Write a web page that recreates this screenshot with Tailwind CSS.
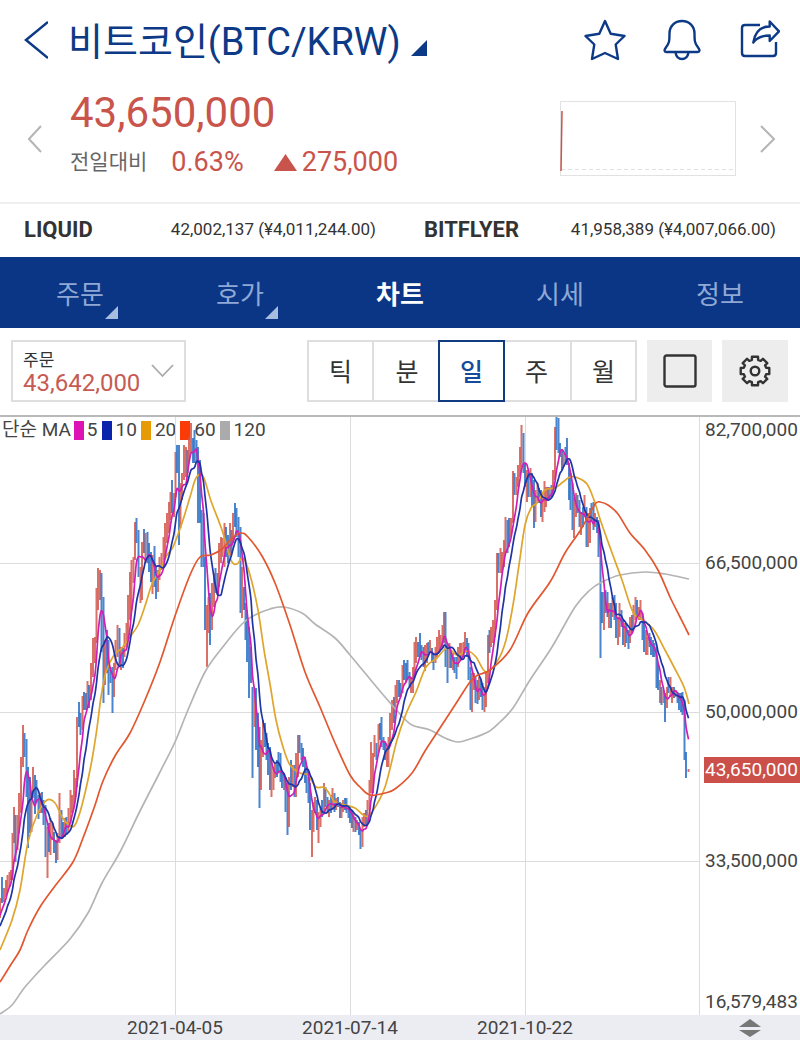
<!DOCTYPE html>
<html lang="ko">
  <head>
    <meta charset="UTF-8" />
    <meta name="viewport" content="width=device-width, initial-scale=1.0" />
    <title>비트코인(BTC/KRW)</title>
    <script src="https://cdn.jsdelivr.net/npm/@tailwindcss/browser@4"></script>
  </head>
  <body
    class="bg-white text-[#333] font-[Roboto,'Noto_Sans_CJK_KR',sans-serif] overflow-x-hidden"
  >
    <div class="flex flex-col min-h-screen">
      <header class="flex items-center h-20 pl-6 pr-5 text-[#0d3a86]">
        <button aria-label="뒤로" class="shrink-0">
          <svg class="w-6 h-10" viewBox="0 0 24 40" fill="none" stroke="currentColor" stroke-width="2.5">
            <path d="M24 2 2 20l22 18" />
          </svg>
        </button>
        <h1 class="ml-5 pt-1 flex-1">
          <button class="flex items-center text-[38px] leading-[44px] whitespace-nowrap">
            비트코인(BTC/KRW)
            <svg class="w-4 h-4 ml-[10px] mt-3" viewBox="0 0 16 16" fill="currentColor">
              <path d="M16 0v16H0z" />
            </svg>
          </button>
        </h1>
        <div class="flex items-center gap-[35px]">
          <button aria-label="관심">
            <svg class="w-[42px] h-[42px]" viewBox="0 0 42 42" fill="none" stroke="currentColor" stroke-width="2.4" stroke-linejoin="round">
              <path d="M21 2l5.700 12.700L40.500 17l-8.800 8.500L34 40l-13-6-13 6 2.300-14.500L1.500 17l13.800-2.300z" />
            </svg>
          </button>
          <button aria-label="알림">
            <svg class="w-[42px] h-[42px]" viewBox="0 0 42 42" fill="none" stroke="currentColor" stroke-width="2.4" stroke-linejoin="round">
              <path d="M21 2C13.500 2 8.500 7.500 8.500 14.500c0 8-.3 10-3.900 14.500-1.500 2-1.500 4 .6 4h31.600c2.100 0 2.100-2 .6-4-3.600-4.500-3.900-6.500-3.900-14.500C33.500 7.500 28.500 2 21 2z" />
              <path d="M14.500 33.500c.7 4 3.200 6.500 6.500 6.500s5.800-2.500 6.500-6.500" />
            </svg>
          </button>
          <button aria-label="공유">
            <svg class="w-[42px] h-[42px]" viewBox="0 0 42 42" fill="none" stroke="currentColor" stroke-width="2.4" stroke-linejoin="round">
              <path d="M22 6H7Q4 6 4 9v25q0 3 3 3h28q3 0 3-3V23" />
              <path d="M15.300 23.500C17 12.500 22 7.500 31.700 7.500V2.500L41 12.300 31.700 22v-5.500C24.500 16.500 19 18.500 15.300 23.500z" />
            </svg>
          </button>
        </div>
      </header>

      <!-- 현재가 -->
      <section class="flex items-start h-[124px] pt-2 pl-7 pr-6 border-b-2 border-[#efefef]">
        <button aria-label="이전 종목" class="mt-[37px] text-[#b5b5b5]">
          <svg class="w-[14px] h-7" viewBox="0 0 14 28" fill="none" stroke="currentColor" stroke-width="2">
            <path d="M13 1 1 14l12 13" />
          </svg>
        </button>
        <div class="ml-7 flex-1 text-[#c9544b]">
          <p class="text-[42px] leading-[50px]">43,650,000</p>
          <p class="flex items-center mt-2 text-[27px] leading-[32px]">
            <span class="text-[21px] text-[#666]">전일대비</span>
            <span class="ml-6">0.63%</span>
            <svg class="w-[23px] h-[17px] ml-[30px]" viewBox="0 0 23 17" fill="currentColor">
              <path d="M11.500 0 23 17H0z" />
            </svg>
            <span class="ml-[5px]">275,000</span>
          </p>
        </div>
        <svg class="w-44 h-[75px] mt-[13px]" viewBox="0 0 176 75" fill="none">
          <rect x=".5" y=".5" width="175" height="74" stroke="#e2e2e2" />
          <path d="M1 68.500H175" stroke="#e0e0e0" stroke-dasharray="4 3" />
          <path d="M1 70 2 10" stroke="#c9544b" stroke-width="1.500" />
        </svg>
        <button aria-label="다음 종목" class="ml-6 mt-[37px] text-[#b5b5b5]">
          <svg class="w-4 h-7" viewBox="0 0 16 28" fill="none" stroke="currentColor" stroke-width="2">
            <path d="M1 1l13 13L1 27" />
          </svg>
        </button>
      </section>

      <!-- 해외 시세 -->
      <section class="grid grid-cols-2 h-[53px] pb-[2px] text-[17px] whitespace-nowrap">
        <div class="flex items-center justify-between pl-6 pr-6">
          <strong class="text-[22px] font-bold">LIQUID</strong>
          <span>42,002,137 (¥4,011,244.00)</span>
        </div>
        <div class="flex items-center justify-between pl-6 pr-6">
          <strong class="text-[22px] font-bold">BITFLYER</strong>
          <span>41,958,389 (¥4,007,066.00)</span>
        </div>
      </section>

      <nav class="grid grid-cols-5 h-[71px] pt-[5px] bg-[#0a3685] text-[26px] text-[#8fa8d6]">
        <a href="#order" class="flex items-center justify-center">
          <span class="relative">주문
            <svg class="absolute -right-[14px] -bottom-1 w-[13px] h-[13px]" viewBox="0 0 13 13" fill="#a9bedf"><path d="M13 0v13H0z" /></svg>
          </span>
        </a>
        <a href="#hoga" class="flex items-center justify-center">
          <span class="relative">호가
            <svg class="absolute -right-[14px] -bottom-1 w-[13px] h-[13px]" viewBox="0 0 13 13" fill="#a9bedf"><path d="M13 0v13H0z" /></svg>
          </span>
        </a>
        <a href="#chart" class="flex items-center justify-center font-bold text-white">차트</a>
        <a href="#sise" class="flex items-center justify-center">시세</a>
        <a href="#info" class="flex items-center justify-center">정보</a>
      </nav>

      <!-- 차트 도구 -->
      <div class="flex items-center h-[87px] pb-[1px] pl-[11px] pr-3">
        <button class="flex items-center justify-between w-[175px] h-[62px] pl-[10px] pr-[10px] border-2 border-[#dedede] text-left">
          <span class="pt-[2px]">
            <span class="block text-[17px] leading-[22px]">주문</span>
            <span class="block text-[24px] leading-[24px] text-[#c65b53]">43,642,000</span>
          </span>
          <svg class="w-[23px] h-[14px]" viewBox="0 0 23 14" fill="none" stroke="#aaa" stroke-width="1.800">
            <path d="M1 1l10.500 11L22 1" />
          </svg>
        </button>
        <div class="flex ml-auto h-[62px] text-[25px]">
          <button class="w-[67px] pt-1 border-2 border-[#dedede]">틱</button>
          <button class="w-[66px] pt-1 border-y-2 border-[#dedede]">분</button>
          <button class="relative z-10 w-[67px] pt-1 -mx-[2px] border-2 border-[#0f3c80] text-[#164a9c] font-medium">일</button>
          <button class="w-[67px] pt-1 border-y-2 border-[#dedede]">주</button>
          <button class="w-[67px] pt-1 border-2 border-[#dedede]">월</button>
        </div>
        <button aria-label="전체 화면" class="flex items-center justify-center w-[65px] h-[62px] ml-[10px] bg-[#ededed]">
          <svg class="w-[34px] h-[34px]" viewBox="0 0 34 34" fill="none" stroke="#333" stroke-width="2.400">
            <rect x="1.500" y="1.500" width="31" height="31" rx="2" />
          </svg>
        </button>
        <button aria-label="설정" class="flex items-center justify-center w-[66px] h-[62px] ml-[10px] bg-[#ededed]">
          <svg class="w-8 h-8" viewBox="0 0 32 32" fill="none" stroke="#333" stroke-width="2.400" stroke-linejoin="round">
            <path id="gear" />
            <circle cx="16" cy="16" r="4.300" />
          </svg>
        </button>
      </div>

      <!-- 차트 -->
      <main class="flex flex-1 border-t-2 border-[#b9b9b9] text-[19px] text-[#444]">
        <div class="relative flex-1">
          <div class="absolute left-[2px] top-[2px] flex items-center h-[22px] whitespace-nowrap">
            <span>단순 MA</span>
            <i class="w-[10px] h-[19px] mx-[3px] bg-[#dc12b4]"></i>5
            <i class="w-[10px] h-[19px] ml-1 mr-1 bg-[#0a24ab]"></i>10
            <i class="w-[10px] h-[19px] ml-1 mr-1 bg-[#e69b06]"></i>20
            <i class="w-[10px] h-[19px] ml-1 mr-1 bg-[#fb3b05]"></i>60
            <i class="w-[10px] h-[19px] ml-1 mr-1 bg-[#ababab]"></i>120
          </div>
          <svg class="relative block w-full h-[598px]" viewBox="0 417 700 598" preserveAspectRatio="none" fill="none">
            <path stroke="#dcdcdc" d="M0 563.500H700M0 712.500H700M0 861.500H700M175.500 417V1015M350.500 417V1015M525.500 417V1015M699.500 417V1015" />
            <g id="candles" stroke-width="2" stroke-opacity=".85"></g>
            <g id="lines" stroke-width="1.700"></g>
          </svg>
        </div>
        <div class="flex flex-col w-[100px] pl-1 leading-6 overflow-hidden">
          <span class="mt-px pl-px">82,700,000</span>
          <span class="mt-[109px] pl-px">66,500,000</span>
          <span class="mt-[125px] pl-px">50,000,000</span>
          <span class="mt-[33px] pl-px leading-[26px] bg-[#ca5049] text-white">43,650,000</span>
          <span class="mt-[66px] pl-px">33,500,000</span>
          <span class="mt-[117px] pl-px">16,579,483</span>
        </div>
      </main>

      <footer class="flex h-[25px] bg-[#ecedf3] text-[19px] leading-[25px] text-[#444]">
        <div class="flex-1">
          <div class="grid grid-cols-3 w-3/4 mx-auto text-center">
            <span>2021-04-05</span>
            <span>2021-07-14</span>
            <span>2021-10-22</span>
          </div>
        </div>
        <button aria-label="차트 높이 조절" class="flex items-center justify-center w-[100px]">
          <svg class="w-[22px] h-[18px]" viewBox="0 0 22 18" fill="#777">
            <path d="M11 0l11 8H0zM11 18l11-7H0z" />
          </svg>
        </button>
      </footer>
    </div>

    <script>
      // x, high, low, u = 상승 / d = 하락
      const candles = `
0 898 918 u,2 877 903 d,4 888 902 u,6 880 897 u,7.5 875 892 u,9.5 872 887 u,11 870 880 u,12.5 833 880 u,14 807 843 u,15.5 815 862 d,
17.5 815 850 u,19 793 833 u,21 757 813 u,23 725 767 u,24.5 733 757 d,26.5 739 797 d,28 767 848 d,30 777 833 d,31.5 793 832 u,33 767 798 u,
35 775 814 d,36.5 780 803 d,38.5 795 819 d,40 793 813 u,42 792 813 d,43.5 800 825 d,45.5 805 857 d,47.5 827 878 u,49 823 852 d,50.5 818 855 u,
52.5 823 840 u,54 832 853 d,56 840 863 d,57.5 833 860 u,59.5 793 843 u,61.5 810 837 d,63 822 838 d,65 818 837 u,66.5 817 835 d,68.5 808 832 u,
70.5 790 823 u,72 795 813 u,74 770 807 u,75.5 778 797 u,77 717 787 u,79 702 727 d,80.5 713 735 d,82.5 696 730 u,84 692 710 d,86 693 710 d,
87.5 681 708 u,89 685 708 d,91 663 700 u,93 638 677 u,95 637 663 u,96.5 588 643 u,98 568 610 u,100 570 600 u,101.5 573 652 d,103.5 597 703 d,
105 640 685 u,107 630 673 d,108.5 640 695 d,110.5 667 683 d,112.5 667 713 d,114 663 697 u,115.5 640 670 u,117.5 625 657 u,119.5 628 665 d,121 647 670 u,
123 648 668 d,124.5 633 657 u,126.5 623 647 u,128 595 640 u,130 572 620 u,131.5 560 610 u,133.5 557 583 u,135 522 560 u,136.5 518 543 d,138.5 530 577 d,
140.5 567 603 u,142 542 600 u,144 529 553 d,145.5 533 563 u,147.5 532 563 d,149 543 572 d,151 552 582 d,152.5 555 594 u,154.5 546 587 d,156 567 599 d,
158 570 592 u,159.5 557 580 u,161.5 553 570 u,163.5 537 563 u,165 523 557 u,167 513 543 u,169 502 533 u,170.5 492 520 u,172 480 513 d,174 493 517 u,
175.5 452 497 u,177 445 473 d,179 445 545 d,180.5 483 528 u,182 473 500 u,184 445 480 u,186 447 477 u,187.5 450 473 d,189 437 463 u,191 423 453 u,
193 438 463 d,194.5 430 463 d,196.5 440 463 d,198 447 523 d,200 460 523 d,201.5 510 567 d,203.5 513 567 d,205 557 630 d,207 605 667 u,208.5 597 633 u,
210 593 645 d,212 583 630 u,214 573 607 u,215.5 568 593 d,217.5 573 595 d,219 543 587 u,221 537 563 u,222.5 538 557 u,224.5 523 567 u,226 527 557 d,
228 535 563 d,230 523 557 u,231.5 530 553 d,233 513 543 u,235 503 527 d,236.5 508 537 d,238.5 517 557 d,240.5 527 613 d,242 567 618 u,244 587 610 d,
245.5 603 640 d,247 610 662 d,249 627 698 d,251 647 683 d,252.5 687 778 d,254.5 690 727 u,256 688 750 d,258 713 767 d,259.5 727 808 d,261 740 790 u,
263 720 757 u,265 723 747 d,266.5 733 760 d,268 743 775 d,270 747 790 d,271.5 760 797 u,273.5 767 790 u,275 763 778 u,277 760 777 d,278.5 752 773 d,
280.5 753 782 d,282 773 788 d,284 773 790 u,285.5 777 812 d,287.5 783 835 d,289 777 827 u,291 760 790 d,292.5 765 787 u,294.5 765 797 d,296 753 797 u,
298 735 777 u,299.5 735 753 d,301.5 743 760 d,303 748 767 d,305 757 783 d,306.5 767 793 d,308.5 777 803 d,310 783 830 d,312 810 857 u,313.5 802 832 u,
315 797 813 u,317 800 830 d,318.5 812 843 u,320.5 807 827 u,322 800 817 d,324 783 813 u,325.5 787 807 d,327.5 797 813 d,329 800 817 u,331 795 813 d,
332.5 788 810 u,334.5 793 812 d,336 798 810 u,338 797 807 d,340 802 818 d,341.5 803 818 u,343 800 812 u,345 798 810 d,346.5 798 813 d,348.5 807 818 d,
350 807 823 d,352 810 828 d,353.5 813 832 u,355.5 817 832 d,357 820 830 u,359 822 835 d,360.5 830 849 d,362.5 817 847 u,364 813 827 u,366 810 825 d,
367.5 800 822 u,369.5 780 810 u,371 742 793 u,373 753 793 u,374.5 735 757 u,376.5 743 760 d,378.5 724 753 u,380 723 740 d,381.5 717 747 d,383.5 737 750 d,
385 743 760 d,387 747 767 u,388.5 737 767 u,390 713 743 u,392 700 730 u,394 697 723 d,395.5 685 713 u,397 680 703 u,399 680 697 d,400.5 683 697 d,
402.5 665 693 u,404 660 680 d,406 663 682 d,407.5 660 680 d,409.5 672 687 d,411 677 693 u,413 667 693 u,414.5 642 673 u,416 637 663 u,418 642 657 d,
420 633 657 d,421.5 645 660 d,423.5 647 667 d,425 645 671 u,427 643 663 u,428.5 642 653 d,430 640 653 u,432 648 663 d,433.5 653 670 d,435.5 647 663 u,
437 637 657 u,439 630 652 u,440.5 635 650 u,442.5 625 648 u,444 612 643 u,445.5 612 667 d,447.5 643 683 d,449.5 643 668 u,451 650 668 d,453 653 670 u,
454.5 657 673 d,456.5 657 679 d,458 647 667 u,460 643 660 u,461.5 643 660 u,463.5 642 657 u,465 632 653 u,467 638 657 d,468.5 643 680 d,470.5 667 710 d,
472 673 712 u,474 673 690 u,475.5 677 703 d,477.5 680 704 d,479 677 700 u,481 680 697 d,482.5 683 710 d,484.5 687 712 u,486 673 707 u,488 635 683 u,
489.5 630 653 d,491 627 647 u,493 620 643 u,495 600 637 u,497 553 610 u,498.5 553 573 d,500.5 548 573 u,502 552 573 u,504 540 567 u,505.5 517 553 u,
507.5 520 553 d,509 518 547 d,511 518 537 u,513 471 523 u,514.5 473 495 d,516.5 477 495 u,518 465 487 u,520 447 477 u,521.5 425 467 u,523.5 433 473 d,
525 463 487 d,527 470 502 u,528.5 473 497 d,530.5 468 497 u,532 473 507 d,534 480 528 d,535.5 490 522 u,537.5 483 503 u,539 488 503 d,541 490 517 d,
542.5 493 522 u,544.5 481 512 u,546 487 507 u,548 487 500 d,549.5 487 500 u,551.5 485 498 d,553 470 492 u,555 427 480 u,556.5 417 450 d,558.5 418 453 d,
560 443 457 d,562 450 470 d,563.5 453 467 u,565.5 447 463 d,567 438 465 d,569 463 500 d,570.5 473 510 d,572.5 483 530 d,574 497 538 u,576 493 517 u,
577.5 495 513 d,579.5 500 527 d,581 512 535 u,583 507 527 d,584.5 495 517 u,586.5 507 547 d,588 513 547 u,590 508 543 u,591.5 503 520 d,593.5 502 530 d,
595 513 527 u,597 517 533 d,598.5 520 557 d,600.5 543 658 d,602 592 623 d,604 592 630 u,605.5 590 613 d,607.5 592 617 d,609 603 628 u,611 603 628 d,
612.5 597 617 u,614.5 595 620 d,616 603 638 d,618 617 645 u,619.5 603 637 u,621.5 610 627 d,623 620 645 d,625 623 647 u,626.5 623 643 d,628.5 630 649 d,
630 617 643 u,632 615 633 d,633.5 605 627 u,635.5 597 620 u,637 600 617 d,639 607 620 u,640.5 600 620 u,642.5 613 640 d,644 623 652 d,646 630 655 u,
647.5 637 655 u,649.5 633 647 d,651 637 655 d,653 640 657 d,654.5 643 657 d,656.5 647 688 d,658 663 690 d,660 680 703 u,661.5 687 705 d,663.5 690 703 u,
665 693 722 d,667 687 708 u,668.5 677 693 d,670.5 677 697 u,672 687 703 u,674 687 698 d,675.5 690 697 u,677.5 692 703 d,679 693 710 d,681 693 712 d,
682.5 692 715 d,684.5 700 760 d,686 752 778 d,688.5 769 772 u`
        .trim()
        .split(",")
        .map((row) => {
          const [x, high, low, dir] = row.trim().split(" ");
          return { x: +x, high: +high, low: +low, up: dir === "u" };
        });

      const ma20 = [[0,950],[12,920],[20,890],[28,842],[37,815],[47,800],[55,803],[62,817],[69,825],[75,825],[82,805],[91,765],[97,728],[101,697],[106,672],[114,655],[122,648],[130,637],[138,625],[145,606],[152,584],[160,570],[167,555],[173,547],[182,523],[190,497],[196,478],[203,476],[211,501],[222,530],[231,560],[237,564],[243,558],[250,575],[258,610],[264,650],[270,684],[276,720],[283,747],[290,765],[300,773],[308,775],[316,787],[325,788],[335,802],[345,805],[355,808],[365,816],[372,812],[385,787],[397,740],[406,714],[416,692],[426,667],[437,658],[447,648],[457,655],[468,651],[476,657],[486,672],[498,660],[506,640],[513,605],[519,565],[525,525],[531,508],[537,503],[545,490],[555,488],[563,482],[570,477],[578,478],[587,484],[594,500],[601,522],[611,550],[622,580],[633,612],[643,620],[654,630],[665,650],[675,669],[684,687],[689,704]];
      const ma60 = [[0,982],[10,966],[20,950],[28,930],[40,907],[55,886],[73,862],[83,838],[94,808],[103,781],[115,756],[130,733],[145,700],[160,662],[175,616],[190,575],[200,557],[211,555],[222,549],[232,538],[241,533],[248,537],[262,556],[275,583],[290,625],[305,672],[320,707],[335,743],[350,775],[360,787],[370,795],[385,793],[395,789],[412,773],[425,751],[440,728],[455,705],[470,682],[478,675],[490,670],[510,650],[528,613],[550,582],[565,553],[580,531],[590,513],[596,503],[600,502],[608,505],[618,514],[630,533],[645,550],[658,570],[670,597],[680,617],[689,635]];
      const ma120 = [[0,1014],[12,1005],[25,987],[45,965],[70,939],[88,913],[102,883],[120,852],[140,811],[160,772],[175,742],[188,710],[205,672],[222,648],[242,624],[255,615],[270,609],[283,607],[302,613],[315,624],[335,638],[350,655],[365,673],[385,697],[400,714],[412,725],[430,730],[445,738],[458,742],[470,739],[488,732],[500,722],[513,708],[530,680],[552,647],[575,607],[590,590],[602,582],[620,575],[645,572],[665,574],[689,579]];

      function addPath(parent, d, stroke) {
        const path = document.createElementNS("http://www.w3.org/2000/svg", "path");
        path.setAttribute("d", d);
        path.setAttribute("stroke", stroke);
        parent.appendChild(path);
      }

      // 점들을 부드럽게 잇는 곡선
      function smooth(p) {
        let d = `M${p[0][0]} ${p[0][1]}`;
        for (let i = 0; i < p.length - 1; i++) {
          const a = p[i - 1] || p[i];
          const b = p[i];
          const c = p[i + 1];
          const e = p[i + 2] || c;
          d += `C${b[0] + (c[0] - a[0]) / 6} ${b[1] + (c[1] - a[1]) / 6} ${c[0] - (e[0] - b[0]) / 6} ${c[1] - (e[1] - b[1]) / 6} ${c[0]} ${c[1]}`;
        }
        return d;
      }

      // 종가 이동평균
      const before = [945, 941, 937, 933, 928, 924, 920, 916, 911];
      const closes = candles.map((c) => c.low + (c.high - c.low) * (c.up ? 0.6 : 0.3));
      function average(n) {
        const all = before.concat(closes);
        return candles.map((c, i) => {
          const end = i + before.length + 1;
          const sum = all.slice(end - n, end).reduce((s, v) => s + v, 0);
          return [c.x, sum / n];
        });
      }

      const candleEl = document.getElementById("candles");
      candles.forEach((c) => {
        addPath(candleEl, `M${c.x} ${c.high}V${c.low}`, c.up ? "#d4584d" : "#2a70c4");
      });

      const lineEl = document.getElementById("lines");
      addPath(lineEl, smooth(ma120), "#b4b4b4");
      addPath(lineEl, smooth(ma20), "#dfa52c");
      addPath(lineEl, smooth(average(5)), "#cf1fb4");
      addPath(lineEl, smooth(average(10)), "#1e35a5");
      addPath(lineEl, smooth(ma60), "#e2572f");

      // 톱니 8개
      let gear = "";
      for (let i = 0; i < 8; i++) {
        [[-0.21, 14.6], [0.21, 14.6], [0.27, 11.6], [0.515, 11.6]].forEach(([t, r], k) => {
          const a = (i * Math.PI) / 4 + t;
          gear += `${i || k ? "L" : "M"}${16 + r * Math.sin(a)} ${16 - r * Math.cos(a)}`;
        });
      }
      document.getElementById("gear").setAttribute("d", gear + "Z");
    </script>
  </body>
</html>
